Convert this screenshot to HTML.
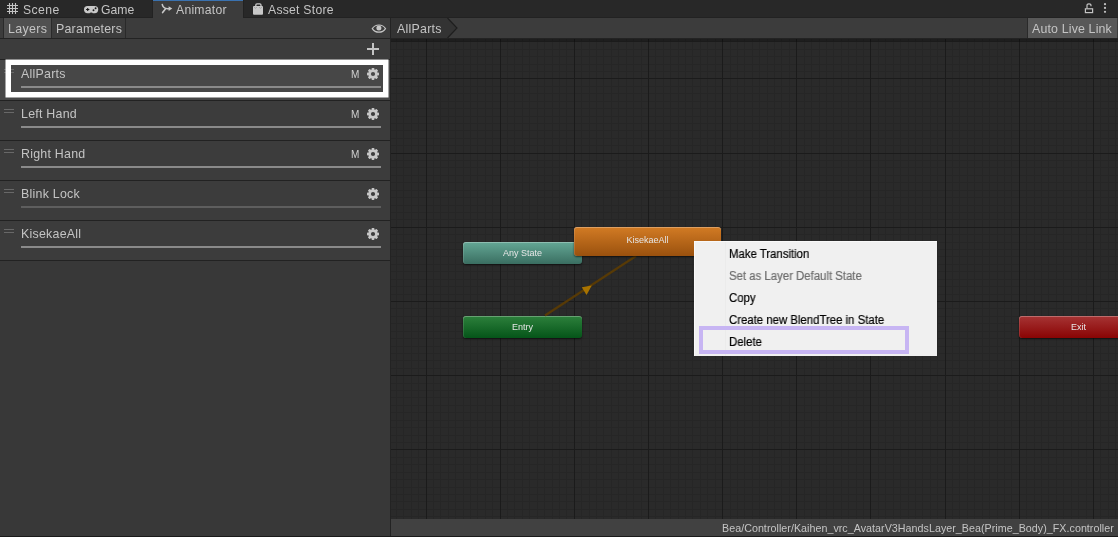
<!DOCTYPE html>
<html><head><meta charset="utf-8">
<style>
*{margin:0;padding:0;box-sizing:border-box}
html,body{-webkit-font-smoothing:antialiased;width:1118px;height:537px;overflow:hidden;background:#383838;font-family:"Liberation Sans",sans-serif;color:#c4c4c4}
.abs{position:absolute}
.t,.lname,.m,.mi,.node{will-change:transform}
.t{position:absolute;white-space:nowrap;line-height:1}
#tabbar{left:0;top:0;width:1118px;height:18px;background:#282828}
#acttab{left:153px;top:0;width:90px;height:18px;background:#3c3c3c;border-top:1px solid #3a72b0}
#toolbar{left:0;top:18px;width:1118px;height:21px;background:#3c3c3c;border-bottom:1px solid #232323}
#leftpanel{left:0;top:39px;width:390px;height:498px;background:#383838}
#lphead{left:0;top:39px;width:390px;height:20px;background:#3c3c3c}
#divider{left:390px;top:18px;width:1px;height:519px;background:#232323}
#graph{left:391px;top:39px;width:727px;height:480px;background:#2a2a2a;overflow:hidden}
#status{left:391px;top:519px;width:727px;height:18px;background:#414141}
.row{position:absolute;left:0;width:390px;height:41px;border-top:1px solid #2a2a2a;border-bottom:1px solid #2a2a2a}
.lname{position:absolute;left:21px;top:8px;font-size:12.4px;letter-spacing:.25px;line-height:1;color:#c4c4c4;white-space:nowrap}
.slider{position:absolute;left:21px;top:26px;width:360px;height:2px;background:#8a8a8a}
.handle{position:absolute;left:4px;top:9px;width:10px;height:4px;border-top:1px solid #686868;border-bottom:1px solid #686868}
.m{position:absolute;left:351px;top:9.5px;font-size:10px;line-height:1;color:#d0d0d0}
.gear{position:absolute;left:366px;top:7px}
.node{position:absolute;border-radius:3px;font-size:9px;color:#e6e6e6;text-align:center;box-shadow:inset 0 1px 0 rgba(255,255,255,.28),inset 1px 0 0 rgba(255,255,255,.12),0 1px 2px rgba(0,0,0,.6)}
.mi{position:absolute;left:34px;font-size:12px;line-height:1;color:#000;white-space:nowrap;transform:scaleX(.948);transform-origin:0 0;-webkit-text-stroke:.2px currentColor}
</style></head><body><div id="wrap">
<div id="tabbar" class="abs"></div>
<div class="abs" style="left:0;top:17px;width:1118px;height:1px;background:#222"></div><div class="abs" style="left:152px;top:0;width:1px;height:18px;background:#222"></div><div class="abs" style="left:243px;top:0;width:1px;height:18px;background:#222"></div><div id="acttab" class="abs"></div>
<!-- tab contents -->
<svg class="abs" style="left:7px;top:3px" width="11" height="11" viewBox="0 0 11 11"><path d="M2.5 0V11M5.5 0V11M8.5 0V11M0 2.5H11M0 5.5H11M0 8.5H11" stroke="#c4c4c4" stroke-width="1.1" fill="none"/></svg>
<div class="t" style="left:23px;top:4px;font-size:12.2px;letter-spacing:.4px">Scene</div>
<svg class="abs" style="left:83px;top:5px" width="16" height="9"><rect x="1" y="0.9" width="14.2" height="7.3" rx="3.6" fill="#c8c8c8"/><ellipse cx="8.2" cy="8.4" rx="1.6" ry="0.8" fill="#282828"/><path d="M3.1 4.5H6.3M4.7 2.9V6.1" stroke="#1a1a1a" stroke-width="1.1"/><circle cx="10.5" cy="5.3" r="0.95" fill="#1a1a1a"/><circle cx="12.6" cy="3.3" r="0.95" fill="#1a1a1a"/></svg>
<div class="t" style="left:101px;top:4px;font-size:12.2px">Game</div>
<svg class="abs" style="left:158px;top:0" width="20" height="18"><path d="M4.3 4.6Q5.2 8.4 9.5 8.7H11" stroke="#c8c8c8" stroke-width="1.6" stroke-linecap="round" fill="none"/><path d="M10.6 6.2L14.3 8.6L10.6 11Z" fill="#c8c8c8"/><path d="M7.2 9.2L4.6 12.6" stroke="#c8c8c8" stroke-width="1.6" stroke-linecap="round"/></svg>
<div class="t" style="left:176px;top:4px;font-size:12.2px;letter-spacing:.25px">Animator</div>
<svg class="abs" style="left:248px;top:0" width="20" height="18"><path d="M7.8 6.5V5Q7.8 3.8 9 3.8H11.8Q13 3.8 13 5V6.5" stroke="#c8c8c8" stroke-width="1.3" fill="none"/><rect x="5" y="5.9" width="10" height="8.8" rx="1" fill="#c8c8c8"/><path d="M6.3 7.2L7.5 8.4L8.7 7.2M11.3 7.2L12.5 8.4L13.7 7.2" stroke="#8a8a8a" stroke-width=".7" fill="none"/></svg>
<div class="t" style="left:268px;top:4px;font-size:12.2px;letter-spacing:.25px">Asset Store</div>
<svg class="abs" style="left:1084px;top:3px" width="10" height="11" viewBox="0 0 10 11"><path d="M3 5.2V2.6Q3 0.9 5 0.9Q7 0.9 7 2.6V3.2" stroke="#c4c4c4" stroke-width="1.2" fill="none"/><rect x="1.4" y="5.8" width="7.2" height="3.8" stroke="#c4c4c4" stroke-width="1.2" fill="none"/></svg>
<svg class="abs" style="left:1103px;top:3px" width="4" height="11"><circle cx="2" cy="1.2" r="1.1" fill="#c4c4c4"/><circle cx="2" cy="4.9" r="1.1" fill="#c4c4c4"/><circle cx="2" cy="8.8" r="1.1" fill="#c4c4c4"/></svg>

<div id="toolbar" class="abs"></div>
<div class="abs" style="left:3px;top:18px;width:1px;height:20px;background:#2a2a2a"></div>
<div class="abs" style="left:4px;top:18px;width:47px;height:20px;background:#505050"></div>
<div class="abs" style="left:51px;top:18px;width:1px;height:20px;background:#2a2a2a"></div>
<div class="abs" style="left:125px;top:18px;width:1px;height:20px;background:#2a2a2a"></div>
<div class="t" style="left:8px;top:23px;font-size:12.4px;letter-spacing:.35px">Layers</div>
<div class="t" style="left:56px;top:23px;font-size:12.4px;letter-spacing:.2px">Parameters</div>
<svg class="abs" style="left:371px;top:24px" width="16" height="10" viewBox="0 0 16 10"><path d="M1.3 4.6C3.3 1.6 5.8 1 7.9 1C10 1 12.5 1.6 14.5 4.6C12.5 7.6 10 8.2 7.9 8.2C5.8 8.2 3.3 7.6 1.3 4.6Z" stroke="#c4c4c4" stroke-width="1.2" fill="none"/><circle cx="7.9" cy="4.1" r="2.5" fill="#c8c8c8"/></svg>
<svg class="abs" style="left:391px;top:18px" width="70" height="20"><path d="M0 0H56.5L66 10L56.5 20H0Z" fill="#333333"/><path d="M56.5 0L66 10L56.5 20" stroke="#1e1e1e" stroke-width="1.2" fill="none"/></svg>
<div class="t" style="left:397px;top:23px;font-size:12.4px;letter-spacing:.25px">AllParts</div>
<div class="abs" style="left:1027px;top:18px;width:1px;height:20px;background:#2a2a2a"></div>
<div class="abs" style="left:1028px;top:18px;width:89px;height:20px;background:#585858"></div>
<div class="t" style="left:1032px;top:23px;font-size:12.4px;letter-spacing:.15px">Auto Live Link</div>

<div id="leftpanel" class="abs"></div><div id="lphead" class="abs"></div>
<svg class="abs" style="left:366px;top:42px" width="14" height="14"><path d="M7 1V13M1 7H13" stroke="#c4c4c4" stroke-width="2"/></svg>

<div class="abs" style="left:0;top:59px;width:390px;height:1px;background:#222"></div>
<div class="abs" style="left:0;top:60px;width:390px;height:40px;background:#474747"></div>
<div class="abs" style="left:0;top:101px;width:390px;height:159px;background:#3c3c3c"></div>
<div class="abs" style="left:0;top:100px;width:390px;height:1px;background:#222"></div>
<div class="abs" style="left:0;top:60px;width:390px;height:40px"><div class="handle"></div><div class="lname">AllParts</div><div class="slider" style="background:#8a8a8a"></div><div class="m">M</div><svg class="gear" width="14" height="14" viewBox="0 0 14 14"><defs><mask id="gm0"><rect width="14" height="14" fill="#fff"/><circle cx="7" cy="7" r="2.1" fill="#000"/></mask></defs><g fill="#c8c8c8" mask="url(#gm0)"><circle cx="7" cy="7" r="4.5"/><rect x="5.6" y="1" width="2.8" height="3.2" rx=".7"/><rect x="5.6" y="1" width="2.8" height="3.2" rx=".7" transform="rotate(45 7 7)"/><rect x="5.6" y="1" width="2.8" height="3.2" rx=".7" transform="rotate(90 7 7)"/><rect x="5.6" y="1" width="2.8" height="3.2" rx=".7" transform="rotate(135 7 7)"/><rect x="5.6" y="1" width="2.8" height="3.2" rx=".7" transform="rotate(180 7 7)"/><rect x="5.6" y="1" width="2.8" height="3.2" rx=".7" transform="rotate(225 7 7)"/><rect x="5.6" y="1" width="2.8" height="3.2" rx=".7" transform="rotate(270 7 7)"/><rect x="5.6" y="1" width="2.8" height="3.2" rx=".7" transform="rotate(315 7 7)"/></g></svg></div>
<div class="abs" style="left:0;top:140px;width:390px;height:1px;background:#222"></div>
<div class="abs" style="left:0;top:100px;width:390px;height:40px"><div class="handle"></div><div class="lname">Left Hand</div><div class="slider" style="background:#8a8a8a"></div><div class="m">M</div><svg class="gear" width="14" height="14" viewBox="0 0 14 14"><defs><mask id="gm1"><rect width="14" height="14" fill="#fff"/><circle cx="7" cy="7" r="2.1" fill="#000"/></mask></defs><g fill="#c8c8c8" mask="url(#gm1)"><circle cx="7" cy="7" r="4.5"/><rect x="5.6" y="1" width="2.8" height="3.2" rx=".7"/><rect x="5.6" y="1" width="2.8" height="3.2" rx=".7" transform="rotate(45 7 7)"/><rect x="5.6" y="1" width="2.8" height="3.2" rx=".7" transform="rotate(90 7 7)"/><rect x="5.6" y="1" width="2.8" height="3.2" rx=".7" transform="rotate(135 7 7)"/><rect x="5.6" y="1" width="2.8" height="3.2" rx=".7" transform="rotate(180 7 7)"/><rect x="5.6" y="1" width="2.8" height="3.2" rx=".7" transform="rotate(225 7 7)"/><rect x="5.6" y="1" width="2.8" height="3.2" rx=".7" transform="rotate(270 7 7)"/><rect x="5.6" y="1" width="2.8" height="3.2" rx=".7" transform="rotate(315 7 7)"/></g></svg></div>
<div class="abs" style="left:0;top:180px;width:390px;height:1px;background:#222"></div>
<div class="abs" style="left:0;top:140px;width:390px;height:40px"><div class="handle"></div><div class="lname">Right Hand</div><div class="slider" style="background:#8a8a8a"></div><div class="m">M</div><svg class="gear" width="14" height="14" viewBox="0 0 14 14"><defs><mask id="gm2"><rect width="14" height="14" fill="#fff"/><circle cx="7" cy="7" r="2.1" fill="#000"/></mask></defs><g fill="#c8c8c8" mask="url(#gm2)"><circle cx="7" cy="7" r="4.5"/><rect x="5.6" y="1" width="2.8" height="3.2" rx=".7"/><rect x="5.6" y="1" width="2.8" height="3.2" rx=".7" transform="rotate(45 7 7)"/><rect x="5.6" y="1" width="2.8" height="3.2" rx=".7" transform="rotate(90 7 7)"/><rect x="5.6" y="1" width="2.8" height="3.2" rx=".7" transform="rotate(135 7 7)"/><rect x="5.6" y="1" width="2.8" height="3.2" rx=".7" transform="rotate(180 7 7)"/><rect x="5.6" y="1" width="2.8" height="3.2" rx=".7" transform="rotate(225 7 7)"/><rect x="5.6" y="1" width="2.8" height="3.2" rx=".7" transform="rotate(270 7 7)"/><rect x="5.6" y="1" width="2.8" height="3.2" rx=".7" transform="rotate(315 7 7)"/></g></svg></div>
<div class="abs" style="left:0;top:220px;width:390px;height:1px;background:#222"></div>
<div class="abs" style="left:0;top:180px;width:390px;height:40px"><div class="handle"></div><div class="lname">Blink Lock</div><div class="slider" style="background:#5e5e5e"></div><svg class="gear" width="14" height="14" viewBox="0 0 14 14"><defs><mask id="gm3"><rect width="14" height="14" fill="#fff"/><circle cx="7" cy="7" r="2.1" fill="#000"/></mask></defs><g fill="#c8c8c8" mask="url(#gm3)"><circle cx="7" cy="7" r="4.5"/><rect x="5.6" y="1" width="2.8" height="3.2" rx=".7"/><rect x="5.6" y="1" width="2.8" height="3.2" rx=".7" transform="rotate(45 7 7)"/><rect x="5.6" y="1" width="2.8" height="3.2" rx=".7" transform="rotate(90 7 7)"/><rect x="5.6" y="1" width="2.8" height="3.2" rx=".7" transform="rotate(135 7 7)"/><rect x="5.6" y="1" width="2.8" height="3.2" rx=".7" transform="rotate(180 7 7)"/><rect x="5.6" y="1" width="2.8" height="3.2" rx=".7" transform="rotate(225 7 7)"/><rect x="5.6" y="1" width="2.8" height="3.2" rx=".7" transform="rotate(270 7 7)"/><rect x="5.6" y="1" width="2.8" height="3.2" rx=".7" transform="rotate(315 7 7)"/></g></svg></div>
<div class="abs" style="left:0;top:260px;width:390px;height:1px;background:#222"></div>
<div class="abs" style="left:0;top:220px;width:390px;height:40px"><div class="handle"></div><div class="lname">KisekaeAll</div><div class="slider" style="background:#8a8a8a"></div><svg class="gear" width="14" height="14" viewBox="0 0 14 14"><defs><mask id="gm4"><rect width="14" height="14" fill="#fff"/><circle cx="7" cy="7" r="2.1" fill="#000"/></mask></defs><g fill="#c8c8c8" mask="url(#gm4)"><circle cx="7" cy="7" r="4.5"/><rect x="5.6" y="1" width="2.8" height="3.2" rx=".7"/><rect x="5.6" y="1" width="2.8" height="3.2" rx=".7" transform="rotate(45 7 7)"/><rect x="5.6" y="1" width="2.8" height="3.2" rx=".7" transform="rotate(90 7 7)"/><rect x="5.6" y="1" width="2.8" height="3.2" rx=".7" transform="rotate(135 7 7)"/><rect x="5.6" y="1" width="2.8" height="3.2" rx=".7" transform="rotate(180 7 7)"/><rect x="5.6" y="1" width="2.8" height="3.2" rx=".7" transform="rotate(225 7 7)"/><rect x="5.6" y="1" width="2.8" height="3.2" rx=".7" transform="rotate(270 7 7)"/><rect x="5.6" y="1" width="2.8" height="3.2" rx=".7" transform="rotate(315 7 7)"/></g></svg></div>
<!-- white highlight -->
<svg class="abs" style="left:0;top:0" width="390" height="110"><rect x="8.25" y="62.25" width="377.5" height="32.5" fill="none" stroke="#fff" stroke-width="5.5"/></svg>

<div id="graph" class="abs"><svg class="abs" style="left:0;top:0" width="727" height="480" shape-rendering="crispEdges"><path d="M5.5 0V480M12.5 0V480M20.5 0V480M27.5 0V480M42.5 0V480M49.5 0V480M57.5 0V480M64.5 0V480M72.5 0V480M79.5 0V480M86.5 0V480M94.5 0V480M101.5 0V480M116.5 0V480M123.5 0V480M131.5 0V480M138.5 0V480M146.5 0V480M153.5 0V480M161.5 0V480M168.5 0V480M175.5 0V480M190.5 0V480M198.5 0V480M205.5 0V480M212.5 0V480M220.5 0V480M227.5 0V480M235.5 0V480M242.5 0V480M250.5 0V480M264.5 0V480M272.5 0V480M279.5 0V480M287.5 0V480M294.5 0V480M301.5 0V480M309.5 0V480M316.5 0V480M324.5 0V480M339.5 0V480M346.5 0V480M353.5 0V480M361.5 0V480M368.5 0V480M376.5 0V480M383.5 0V480M390.5 0V480M398.5 0V480M413.5 0V480M420.5 0V480M428.5 0V480M435.5 0V480M442.5 0V480M450.5 0V480M457.5 0V480M465.5 0V480M472.5 0V480M487.5 0V480M494.5 0V480M502.5 0V480M509.5 0V480M517.5 0V480M524.5 0V480M531.5 0V480M539.5 0V480M546.5 0V480M561.5 0V480M568.5 0V480M576.5 0V480M583.5 0V480M591.5 0V480M598.5 0V480M606.5 0V480M613.5 0V480M620.5 0V480M635.5 0V480M643.5 0V480M650.5 0V480M657.5 0V480M665.5 0V480M672.5 0V480M680.5 0V480M687.5 0V480M695.5 0V480M709.5 0V480M717.5 0V480M724.5 0V480M0 2.5H727M0 10.5H727M0 17.5H727M0 25.5H727M0 32.5H727M0 47.5H727M0 54.5H727M0 62.5H727M0 69.5H727M0 77.5H727M0 84.5H727M0 91.5H727M0 99.5H727M0 106.5H727M0 121.5H727M0 128.5H727M0 136.5H727M0 143.5H727M0 151.5H727M0 158.5H727M0 166.5H727M0 173.5H727M0 180.5H727M0 195.5H727M0 203.5H727M0 210.5H727M0 217.5H727M0 225.5H727M0 232.5H727M0 240.5H727M0 247.5H727M0 255.5H727M0 269.5H727M0 277.5H727M0 284.5H727M0 292.5H727M0 299.5H727M0 307.5H727M0 314.5H727M0 321.5H727M0 329.5H727M0 344.5H727M0 351.5H727M0 358.5H727M0 366.5H727M0 373.5H727M0 381.5H727M0 388.5H727M0 396.5H727M0 403.5H727M0 418.5H727M0 425.5H727M0 433.5H727M0 440.5H727M0 448.5H727M0 455.5H727M0 462.5H727M0 470.5H727M0 477.5H727" stroke="#262626" stroke-width="1" fill="none"/><path d="M35.5 0V480M109.5 0V480M183.5 0V480M257.5 0V480M331.5 0V480M405.5 0V480M479.5 0V480M554.5 0V480M628.5 0V480M702.5 0V480M0 39.5H727M0 114.5H727M0 188.5H727M0 262.5H727M0 336.5H727M0 410.5H727" stroke="#1b1b1b" stroke-width="1" fill="none"/></svg><div class="abs" style="left:0;top:0;width:727px;height:3px;background:rgba(0,0,0,.27)"></div>
</div>
<div id="divider" class="abs"></div>
<div id="status" class="abs"></div>
<div class="t" style="left:722px;top:523px;font-size:10.7px;letter-spacing:.04px">Bea/Controller/Kaihen_vrc_AvatarV3HandsLayer_Bea(Prime_Body)_FX.controller</div>

<!-- nodes -->
<div class="node" style="left:463px;top:242px;width:119px;height:22px;background:linear-gradient(#64a795,#3a6e61);line-height:22px">Any State</div>
<div class="node" style="left:463px;top:316px;width:119px;height:22px;background:linear-gradient(#2d803c,#055519);line-height:22px">Entry</div>
<div class="node" style="left:1019px;top:316px;width:119px;height:22px;background:linear-gradient(#a63434,#8a0404);line-height:22px">Exit</div>
<svg class="abs" style="left:0;top:0" width="1118" height="537"><path d="M545 315.5L636 256" stroke="#573a06" stroke-width="2.2"/><path d="M581.8 287.2L591.8 285.4L586.5 295Z" fill="#a87300"/></svg>
<div class="node" style="left:574px;top:227px;width:147px;height:29px;background:linear-gradient(#d27b24,#9a510e);line-height:26px">KisekaeAll</div>

<!-- context menu -->
<div class="abs" style="left:694px;top:241px;width:243px;height:115px;background:#f0f0f0;border-top:1px solid #f9f9f9;border-left:1px solid #f9f9f9">
<div class="abs" style="left:30px;top:0;width:1px;height:114px;background:#ebebeb"></div>
<div class="mi" style="top:6px">Make Transition</div>
<div class="mi" style="top:28px;color:#6d6d6d">Set as Layer Default State</div>
<div class="mi" style="top:50px">Copy</div>
<div class="mi" style="top:72px">Create new BlendTree in State</div>
<div class="mi" style="top:94px">Delete</div>
</div>
<div class="abs" style="left:699px;top:326px;width:210px;height:28px;border:4.5px solid #c7b5f3"></div>
<div class="abs" style="left:0;top:536px;width:1118px;height:1px;background:#1a1a1a"></div>
</div></body></html>
